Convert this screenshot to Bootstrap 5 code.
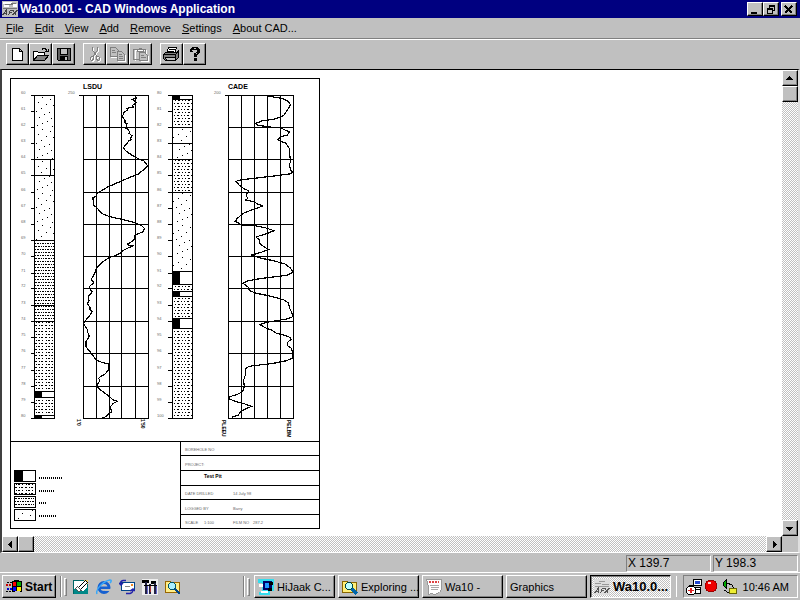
<!DOCTYPE html>
<html lang="en">
<head>
<meta charset="utf-8">
<meta name="viewport" content="width=device-width, initial-scale=1">
<title>Wa10.001 - CAD Windows Application</title>
<link href="https://cdn.jsdelivr.net/npm/bootstrap@5.3.0/dist/css/bootstrap.min.css" rel="stylesheet">
<style>
body{font-family:"Liberation Sans",Arial,sans-serif;font-size:11px;line-height:16px;color:#000;background:#c0c0c0;}
button{font:inherit;color:inherit;}
svg{display:block;flex:none;shape-rendering:crispEdges;}
.titlebar{background:#000080;color:#fff;height:18px;padding:0 3px 0 2px;gap:2px;font-weight:bold;font-size:12px;line-height:18px;}
.bevel{background:#c0c0c0;border:1px solid;border-color:#fff #000 #000 #fff;box-shadow:inset -1px -1px #808080;border-radius:0;padding:0;display:flex;align-items:center;justify-content:center;flex:none;}
.winbtn{width:16px;height:14px;}
.menus{height:20px;padding:0 6px;gap:11px;}
.menus a{color:#000;text-decoration:none;line-height:20px;}
.tools{height:31px;padding:3px 6px 5px;border-top:1px solid #808080;box-shadow:inset 0 1px #fff;}
.toolgroup{margin-right:8px;padding-top:1px;}
.toolbtn{width:23px;height:22px;}
.client{border:1px solid #808080;border-top:1px solid #000;border-left:2px solid #404040;border-right:2px solid #dfdfdf;border-bottom-color:#fff;}
.sheet{padding:8px 8px 0;}
.track{background:repeating-conic-gradient(#c0c0c0 0 25%,#fff 0 50%) 0 0/2px 2px;}
.arrowbtn{width:16px;height:16px;}
.status{height:19px;padding:2px 2px 0;gap:2px;}
.pane{width:85px;height:17px;border:1px solid;border-color:#808080 #fff #fff #808080;padding-left:1px;line-height:15px;font-size:12px;}
.taskbar{height:28px;border-top:1px solid #fff;padding:2px 2px;}
.tasks{gap:3px;}
.taskbtn{height:23px;width:81px;justify-content:flex-start;padding:0 3px;gap:3px;white-space:nowrap;overflow:hidden;}
.startbtn{width:54px;gap:2px;font-weight:bold;font-size:12px;}
.pushed{border-color:#000 #fff #fff #000;box-shadow:inset 1px 1px #808080;font-weight:bold;font-size:13px;}
.grip{width:7px;height:21px;border-left:1px solid #808080;box-shadow:inset 1px 0 #fff;padding:2px 0 2px 3px;flex:none;}
.grip i{display:block;width:3px;height:18px;border:1px solid;border-color:#fff #808080 #808080 #fff;}
.quick{width:176px;padding-left:6px;gap:7px;flex:none;}
.quick button,.tray button{border:0;background:none;padding:0;}
.tray{height:23px;width:115px;flex:none;border:1px solid;border-color:#808080 #fff #fff #808080;padding:0 8px 0 2px;gap:2px;white-space:nowrap;}
.log text{font-size:4px;fill:#666;}
.log .head{font-size:7px;font-weight:bold;fill:#000;}
.log .sub{font-size:5px;font-weight:bold;fill:#000;}
.log .upright{writing-mode:vertical-rl;font-size:5px;font-weight:bold;fill:#000;}
</style>
<script src="https://cdn.jsdelivr.net/npm/bootstrap@5.3.0/dist/js/bootstrap.bundle.min.js"></script>
</head>
<body class="d-flex flex-column min-vh-100 overflow-hidden">
<header>
<div class="titlebar d-flex align-items-center">
<svg width="16" height="16"><path fill="#c0c0c0" d="M0 0h16v16H0z"/><path fill="#fff" d="M1 1h9v2H1zM2 4h5v2H2zM11 3h4v3h-4z"/><path stroke="#777" d="M1 7.500h14M9 2.500h5M3 3.500h8"/><path fill="none" stroke="#444" d="M.5 14l4-5v5M2 12.500h3M6.500 14l2-5h3M7 11.500h3M11 9l3 5M15.500 9l-5 5"/></svg>
<span class="flex-grow-1">Wa10.001 - CAD Windows Application</span>
<div class="d-flex">
<button class="bevel winbtn" aria-label="Minimize"><svg width="10" height="9"><path fill="#000" d="M1 7h6v2H1z"/></svg></button>
<button class="bevel winbtn" aria-label="Restore"><svg width="10" height="9"><path fill="none" stroke="#000" d="M3.500 3V.5h5v5H6M1.500 3.500h5v5h-5zM3 1.500h6M1 4.500h6"/></svg></button>
</div>
<button class="bevel winbtn" aria-label="Close"><svg width="10" height="9"><path stroke="#000" stroke-width="2" d="M1 1l7 7M8 1L1 8"/></svg></button>
</div>
<nav class="menus d-flex" aria-label="Menu">
<a href="#"><u>F</u>ile</a><a href="#"><u>E</u>dit</a><a href="#"><u>V</u>iew</a><a href="#"><u>A</u>dd</a><a href="#"><u>R</u>emove</a><a href="#"><u>S</u>ettings</a><a href="#"><u>A</u>bout CAD...</a>
</nav>
<div class="tools d-flex" role="toolbar" aria-label="Tools">
<div class="toolgroup d-flex">
<button class="bevel toolbtn" aria-label="New"><svg width="16" height="15"><path fill="#fff" stroke="#000" d="M2.500 1.500h7l3 3v9h-10zM9.500 1.500v3h3"/></svg></button>
<button class="bevel toolbtn" aria-label="Open"><svg width="16" height="15"><path fill="#fff" stroke="#000" d="M.5 12.500v-8h4l1 1h6v3h-6z"/><path fill="#808080" stroke="#000" d="M.5 13.500l4-5h11l-4 5z"/><path fill="none" stroke="#000" d="M9 2.500l1-1h2l2 2M15 1.500v3h-3"/></svg></button>
<button class="bevel toolbtn" aria-label="Save"><svg width="16" height="15"><path fill="#606060" stroke="#000" d="M1.500 1.500h13v12h-12l-1-1z"/><path fill="#c0c0c0" stroke="#000" d="M4.500 1.500h7v6h-7z"/><path d="M4 9h8v5H4z"/><path fill="#c0c0c0" d="M9 10h2v3H9z"/></svg></button>
</div>
<div class="toolgroup d-flex">
<button class="bevel toolbtn" aria-label="Cut"><svg width="16" height="15"><g fill="none" stroke="#fff" transform="translate(1 1)"><path d="M5.500 0v3l4 6M10.500 0v3l-4 6M4.500 9.500h2v3l-2 1-1-1v-2zM9.500 9.500h2l1 1v2l-1 1-2-1z"/></g><path fill="none" stroke="#808080" d="M5.500 0v3l4 6M10.500 0v3l-4 6M4.500 9.500h2v3l-2 1-1-1v-2zM9.500 9.500h2l1 1v2l-1 1-2-1z"/></svg></button>
<button class="bevel toolbtn" aria-label="Copy"><svg width="16" height="15"><path fill="none" stroke="#fff" d="M1.500 2.500h6l2 2v6h-8zM8.500 6.500h5l2 2v6h-7z"/><path fill="#c0c0c0" stroke="#808080" d="M.5.500h5l3 3v6h-8z"/><path stroke="#808080" d="M2 3.500h3M2 5.500h4"/><path fill="#c0c0c0" stroke="#808080" d="M7.500 4.500h4l3 3v6h-7z"/><path stroke="#808080" d="M9 7.500h3M9 9.500h4M9 11.500h4"/></svg></button>
<button class="bevel toolbtn" aria-label="Paste"><svg width="16" height="15"><path fill="none" stroke="#fff" d="M2.500 13.500v-10h11v3M8.500 7.500h5l2 2v5h-7z"/><path fill="none" stroke="#808080" d="M6 12.500H.5v-10h12v3M4.500 4v-2h2v-1h2v1h2v2z"/><path fill="#c0c0c0" stroke="#808080" d="M6.500 5.500h5l3 3v5h-8z"/><path stroke="#808080" d="M8 8.500h3M8 10.500h5"/></svg></button>
</div>
<div class="toolgroup d-flex">
<button class="bevel toolbtn" aria-label="Print"><svg width="17" height="15"><path fill="#fff" stroke="#000" d="M3.500 6.500l2-6h8l-2 6z"/><path stroke="#000" d="M6 2.500h6M5 4.500h6"/><path fill="#808080" stroke="#000" d="M.5 7.500l2-2h11l2-2v7l-3 3h-10l-2-2z"/><path fill="none" stroke="#000" d="M.5 7.500h12v6M12.500 7.500l3-3"/><path fill="#c0c0c0" stroke="#000" d="M2.500 10.500h10v3h-9z"/></svg></button>
<button class="bevel toolbtn" aria-label="Help"><svg width="16" height="15"><path fill="none" stroke="#000" stroke-width="3" d="M4.500 5V3l2-1.500h3L11.500 3v2L8.500 7.500V10M8.500 11v3"/><path stroke="#c0c0c0" d="M5 3.500h1M7 1.500h2M9 6.500h1"/></svg></button>
</div>
</div>
</header>

<main class="client d-flex flex-column flex-grow-1">
<div class="d-flex flex-grow-1">
<div class="sheet bg-white flex-grow-1 overflow-hidden">
<svg class="log" width="311" height="452" viewBox="10 78 311 452" role="img" aria-label="Borehole log sheet">
<defs>
<pattern id="sand" width="20" height="32" patternUnits="userSpaceOnUse" x="34" y="96"><path d="M8 1h1v1h-1zM16 3h1v1h-1zM4 6h1v1h-1zM12 8h1v1h-1zM19 9h1v1h-1zM7 12h1v1h-1zM2 15h1v1h-1zM15 16h1v1h-1zM10 18h1v1h-1zM5 21h1v1h-1zM17 22h1v1h-1zM13 25h1v1h-1zM8 27h1v1h-1zM3 29h1v1h-1zM18 30h1v1h-1z"/></pattern>
<pattern id="silt" width="10" height="6" patternUnits="userSpaceOnUse" x="34" y="96"><path d="M1 1h2v1H1zM5 1h1v1H5zM7 1h2v1H7zM2 4h1v1H2zM4 4h2v1H4zM8 4h1v1H8z"/></pattern>
<pattern id="clay" width="10" height="6" patternUnits="userSpaceOnUse" x="34" y="96"><path d="M1 0h2v1H1zM4 0h2v1H4zM7 0h1v1H7zM9 0h1v1H9zM1 3h1v1H1zM3 3h2v1H3zM6 3h1v1H6zM8 3h2v1H8z"/></pattern>
<pattern id="loam" width="10" height="6" patternUnits="userSpaceOnUse" x="173" y="97"><path d="M1 0h1v1H1zM4 0h2v1H4zM8 0h1v1H8zM2 3h1v1H2zM5 3h2v1H5zM9 3h1v1H9z"/></pattern>
</defs>
<path fill="none" stroke="#000" d="M10.500 78.500h309v450h-309zM10.500 441.500h309M180.500 441.500v87M180.500 455.500h139M180.500 470.500h139M180.500 485.500h139M180.500 499.500h139M180.500 514.500h139"/>
<!-- strata column, 60 to 80 -->
<path fill="url(#sand)" d="M35 96h19v144H35z"/><path fill="url(#clay)" d="M35 241h19v80H35z"/><path fill="url(#silt)" d="M35 322h19v96H35z"/>
<path fill="#fff" d="M35 392h19v5H35zM35 416h19v2H35z"/><path d="M35 392h7v5h-7zM35 415h7v3h-7z"/>
<path fill="none" stroke="#000" d="M34.500 95.500h20v323h-20zM34.500 159.500h20M34.500 175.500h20M50.500 160v15M34.500 240.500h20M34.500 305.500h20M34.500 321.500h20M34.500 391.500h20M34.500 397.500h20M34.500 415.500h20"/>
<!-- strata column, 80 to 100 -->
<path fill="url(#loam)" d="M173 100h19v27h-19zM173 160h19v32h-19zM173 285h19v6h-19zM173 297h19v21h-19zM173 329h19v89h-19z"/><path fill="url(#sand)" d="M173 128h19v32h-19zM173 193h19v78h-19z"/>
<path d="M173 96h7v3h-7zM173 272h7v12h-7zM173 292h7v5h-7zM173 319h7v9h-7z"/>
<path fill="none" stroke="#000" d="M172.500 95.500h20v323h-20zM172.500 99.500h20M172.500 127.500h20M172.500 143.500h20M172.500 159.500h20M172.500 192.500h20M172.500 271.500h20M172.500 284.500h20M172.500 291.500h20M172.500 296.500h20M172.500 318.500h20M172.500 328.500h20"/>
<g id="scale"></g>
<!-- trace grids -->
<path fill="none" stroke="#000" d="M79 95.500h69.500v323h-65v-323M96.500 95v323M109.500 95v323M121.500 95v323M135.500 95v323M83 127.500h65M83 159.500h65M83 192.500h65M83 224.500h65M83 256.500h65M83 288.500h65M83 321.500h65M83 353.500h65M83 386.500h65"/>
<path fill="none" stroke="#000" d="M225 95.500h68.500v323h-65v-323M241.500 95v323M254.500 95v323M267.500 95v323M280.500 95v323M228 127.500h65M228 159.500h65M228 192.500h65M228 224.500h65M228 256.500h65M228 288.500h65M228 321.500h65M228 353.500h65M228 386.500h65"/>
<g fill="none" stroke="#000" stroke-width="3.600">
<path transform="translate(0 70) scale(.33333)" d="M405 76L410 85 396 88 410 98 398 106 400 111 380 115 383 119 372 128 367 140 376 152 373 158 381 160 378 175 384 178 388 185 387 190 396 197 391 206 393 209 386 212 382 221 376 225 370 234 380 245 400 258 415 266 432 273 443 288 430 300 415 312 390 322 360 335 325 350 300 365 290 372 289 380 279 382 280 406 289 411 300 425 310 433 330 440 360 447 400 457 425 467 434 476 428 486 412 492 402 498 405 505 395 515 383 522 385 527 397 528 372 540 360 550 345 558 328 562 305 578 289 595 287 605 281 615 274 628 281 638 268 650 271 660 277 665 265 680 267 692 262 700 270 713 270 720 277 725 268 738 258 750 250 760 262 778 263 787 268 798 258 815 258 830 272 848 289 870 305 877 327 882 324 902 315 912 300 921 296 925 300 933 292 942 292 952 310 966 328 980 340 990 352 994 340 1000 330 1012 336 1026 325 1032 318 1040 303 1045"/>
<path transform="translate(150 70) scale(.33333)" d="M355 78L375 82 395 85 412 92 422 104 412 120 402 135 390 142 370 148 335 153 318 160 322 166 362 171"/>
<path transform="translate(150 70) scale(.33333)" d="M393 174L405 180 418 185 412 195 395 199 382 209 408 220 418 235 420 262 423 270 418 285 422 300 429 307 418 312 380 317 320 324 270 330 258 334 268 346 280 355 297 363 288 375 293 385 287 390 310 395 325 403 339 408 310 418 280 430 262 445 256 454 268 461 275 465 315 467 345 473 372 482 352 490 318 501 328 510 330 522 345 532 356 539 330 548 305 555 330 564 370 572 405 582 422 595 430 607 410 616 370 621 330 626 295 632 279 640 295 652 298 662 320 670 350 676 380 683 405 691 416 700 419 715 424 725 430 739 415 746 385 751 350 757 330 764 345 773 365 780 380 790 400 795 420 802 423 808 412 818 414 828 425 835 428 855 430 863 410 872 370 880 320 886 297 889 286 897 286 915 281 930 283 950 278 965 262 973 240 980 236 986 258 995 285 1002 305 1009 290 1015 272 1024 265 1035 245 1042"/>
</g>
<text class="head" x="83" y="89">LSDU</text><text class="head" x="228" y="89">CADE</text>
<text x="68" y="94">250</text><text x="214" y="94">200</text>
<text class="upright" x="79" y="419">1'0</text><text class="upright" x="143" y="419">1'50</text><text class="upright" x="224" y="420">PLEEU</text><text class="upright" x="289" y="420">PELBM</text>
<!-- legend -->
<path fill="url(#silt)" d="M15 484h20v10H15z"/><path fill="url(#clay)" d="M15 497h20v10H15z"/><path fill="url(#sand)" d="M15 510h20v10H15z"/><path d="M15 471h8v10h-8z"/>
<path fill="none" stroke="#000" d="M14.500 470.500h21v11h-21zM14.500 483.500h21v11h-21zM14.500 496.500h21v11h-21zM14.500 509.500h21v11h-21z"/>
<path fill="none" stroke="#000" stroke-width="2" stroke-dasharray="1 1" d="M39 478h15M55 478h7M39 491h15M39 503h7M39 516h17"/>
<!-- title block -->
<text x="185" y="451">BOREHOLE NO</text><text x="185" y="466">PROJECT:</text><text class="sub" x="204" y="478">Test Pit</text>
<text x="185" y="495">DATE DRILLED</text><text x="233" y="495">14 July 98</text><text x="185" y="510">LOGGED BY</text><text x="233" y="510">Barry</text>
<text x="185" y="524">SCALE</text><text x="204" y="524">1:100</text><text x="233" y="524">FILM NO</text><text x="253" y="524">287.2</text>
</svg>
</div>
<div class="track d-flex flex-column flex-shrink-0" role="group" aria-label="Vertical scroll">
<button class="bevel arrowbtn" aria-label="Scroll up"><svg width="8" height="5"><path d="M3 0h1v1h1v1h1v1h1v1H0V3h1V2h1V1h1z"/></svg></button>
<button class="bevel arrowbtn" aria-label="Scroll thumb"></button>
<button class="bevel arrowbtn mt-auto" aria-label="Scroll down"><svg width="8" height="5"><path d="M0 1h7v1H6v1H5v1H4v1H3V4H2V3H1V2H0z"/></svg></button>
</div>
</div>
<div class="d-flex">
<div class="track d-flex flex-grow-1" role="group" aria-label="Horizontal scroll">
<button class="bevel arrowbtn" aria-label="Scroll left"><svg width="5" height="7"><path d="M0 3h1V2h1V1h1V0h1v7H3V6H2V5H1V4H0z"/></svg></button>
<button class="bevel arrowbtn" aria-label="Scroll thumb"></button>
<button class="bevel arrowbtn ms-auto" aria-label="Scroll right"><svg width="5" height="7"><path d="M1 0h1v1h1v1h1v1h1v1H4v1H3v1H2v1H1z"/></svg></button>
</div>
<div class="arrowbtn"></div>
</div>
</main>

<div class="status d-flex justify-content-end">
<div class="pane">X 139.7</div><div class="pane">Y 198.3</div>
</div>
<footer class="taskbar d-flex align-items-center">
<button class="bevel taskbtn startbtn"><svg width="17" height="15"><path d="M6 2l4-1 6 1v11l-5-1-5 1z"/><path stroke="#000" stroke-dasharray="2 1" d="M1 3.500h5M0 12.500h6"/><path stroke="#c00" stroke-width="2" stroke-dasharray="2 1" d="M0 6h6"/><path stroke="#00c" stroke-width="2" stroke-dasharray="2 1" d="M1 10h5"/><path fill="#f00" d="M7 3h3v4H7z"/><path fill="#0a0" d="M11 3h4v4h-4z"/><path fill="#00f" d="M7 8h3v4H7z"/><path fill="#fe0" d="M11 8h4v4h-4z"/></svg>Start</button>
<div class="grip ms-1"><i></i></div>
<div class="quick d-flex align-items-center">
<button aria-label="Show desktop"><svg width="16" height="16"><path fill="#fff" stroke="#066" d="M.5 1.500h14v13H.5z"/><path fill="#088" d="M1 10h4l-2 2h8l4-5v8H1z"/><path fill="#ec6" d="M11 1h4v4h-2z"/><path fill="#fff" stroke="#000" d="M5.500 8.500l7-7 2 2-7 7z"/><path fill="#fff" stroke="#555" d="M4.500 7.500l4 4-3 1-3-3z"/></svg></button>
<button aria-label="Internet Explorer"><svg width="16" height="16"><g shape-rendering="auto"><circle cx="8" cy="8.500" r="5" fill="none" stroke="#1660d0" stroke-width="3"/><path fill="#c0c0c0" d="M9 10h6v2H9z"/><path fill="#1660d0" d="M4 7.500h10V10H4z"/><path fill="none" stroke="#39a8f8" stroke-width="1.500" d="M1 15C-1 10 8 2 14 1c2 0 1 2 0 3"/></g></svg></button>
<button aria-label="Outlook Express"><svg width="16" height="16"><path fill="#fff" stroke="#048" d="M2.500 3.500h13v8h-13z"/><path fill="#e82" d="M12 5h2v2h-2z"/><path stroke="#888" d="M6 7.500h5"/><g fill="none" stroke="#22a" shape-rendering="auto"><path d="M7 1.500H4Q1 2 1.500 6M0 4l2 2 2-2" stroke-width="1.500"/><path d="M7 14.500h4q3-1 3-4M11 12l3-2 2 2" stroke-width="1.500"/></g></svg></button>
<button aria-label="Tools"><svg width="16" height="16"><path fill="#eee" d="M0 0h16v16H0z"/><path fill="#000" d="M0 1h7v3H0zM9 2h5v3H9z"/><path stroke="#224" stroke-width="2" d="M4 3v12M8 5v10M13 4v11"/><path stroke="#66c" d="M5.500 6v9M14.500 6v9"/><path stroke="#a33" d="M8.500 7v6"/><path stroke="#000" d="M2 6.500h13"/></svg></button>
<button aria-label="Explore"><svg width="16" height="16"><path fill="#fe8" stroke="#960" d="M.5 2.500h5l1 1h8v10H.5z"/><circle cx="7" cy="7" r="3.500" fill="#aef" stroke="#056"/><path stroke="#048" stroke-width="2" d="M10 10l5 5"/></svg></button>
</div>
<div class="grip"><i></i></div>
<div class="tasks d-flex flex-grow-1 ms-1">
<button class="bevel taskbtn"><svg width="16" height="16"><path fill="#3de" d="M0 0h16v12h-4v4H1v-3h3V4H0z"/><path fill="#fff" d="M1 5h4v3H1zM3 12h7v2H3z"/><path fill="#006" d="M5 2h9v9H5z"/><path fill="#29f" d="M7 4h4v5H7z"/><path fill="#000" d="M11 3h4v3h-4zM10 9h4v3h-4z"/></svg>HiJaak C...</button>
<button class="bevel taskbtn"><svg width="16" height="16"><path fill="#fe7" stroke="#860" d="M.5 2.500h5l1 1h8v10H.5z"/><circle cx="7" cy="7" r="3.500" fill="#bff" stroke="#044"/><path stroke="#06a" stroke-width="3" d="M10 10l5 5"/></svg>Exploring ...</button>
<button class="bevel taskbtn"><svg width="16" height="16"><path fill="#fff" stroke="#999" d="M.5.500h15v10l-2 3-5 2-3-1-3 1v-8z"/><path stroke="#d44" stroke-width="2" stroke-dasharray="2 1" d="M3 3h10"/><path stroke="#aaa" d="M4 6.500h9M5 8.500h8M5 10.500h7"/></svg>Wa10 -</button>
<button class="bevel taskbtn">Graphics</button>
<button class="bevel taskbtn track pushed"><svg width="16" height="16"><path fill="#ddd" d="M0 0h16v16H0z"/><path stroke="#999" d="M1 4.500h6M5 2.500h6M8 5.500h7M1 7.500h14"/><path fill="none" stroke="#555" d="M.5 14l4-5v5M2 12.500h3M6.500 14l2-5h3M7 11.500h3M11 9l3 5M15.500 9l-5 5"/></svg>Wa10.0...</button>
</div>
<div class="grip border-0 d-none d-md-block"></div>
<div class="tray d-flex align-items-center">
<button aria-label="Scheduler"><svg width="16" height="16"><path fill="#fff" stroke="#000" d="M7.500.500h8v6h-8z"/><path fill="#24c" d="M9 2h5v3H9z"/><path fill="#fff" stroke="#000" d="M8.500 8.500h6v6h-6z"/><path d="M10 10h4v1h-4zM3 6h4v2H3z"/><path fill="#fff" stroke="#000" d="M.5 9.500l2-2h5l2 2v4l-2 2h-5l-2-2z"/><path fill="#d22" d="M4 9h2v5H4zM2 11h6v1H2z"/></svg></button>
<button aria-label="Monitor"><svg width="15" height="16"><circle cx="7" cy="7" r="6" fill="#e00" stroke="#900"/><path fill="#fcc" d="M4 3h3v2H4z"/></svg></button>
<button aria-label="Sound"><svg width="17" height="16"><path fill="#0a0" stroke="#000" d="M2.500 3.500l3-3v9l-3-3z"/><path fill="none" stroke="#000" d="M6 4l5 2 2 4M3 11l5 3"/><path fill="#ee3" stroke="#660" d="M8.500 9.500h7v5h-7z"/></svg></button>
<time class="ms-auto">10:46 AM</time>
</div>
</footer>
<script>
// Depth marks beside both strata columns.
const ys=[95,111,127,143,159,175,192,208,224,240,256,273,288,305,321,337,353,370,386,402,418];
let out='';
ys.forEach((y,i)=>{
  [[21,31,60],[157,168,80]].forEach(([tx,lx,start])=>{
    out+=`<path stroke="#000" d="M${lx} ${y}.5h4"/><text x="${tx}" y="${y-1}">${start+i}</text>`;
  });
});
document.getElementById('scale').innerHTML=out;
</script>
</body>
</html>
